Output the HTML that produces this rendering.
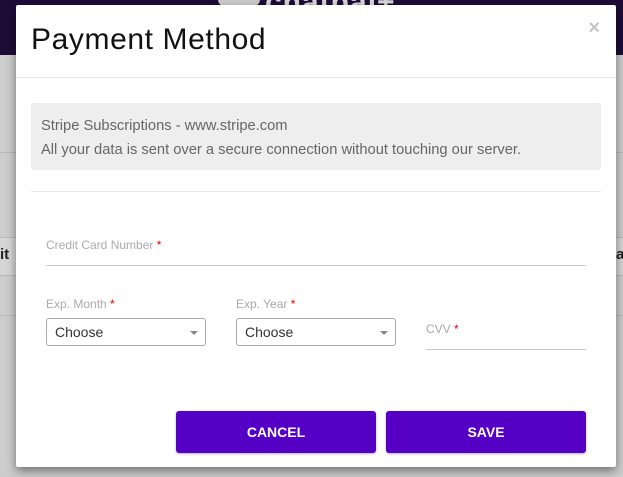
<!DOCTYPE html>
<html><head><meta charset="utf-8"><style>
*{box-sizing:border-box;margin:0;padding:0}
body{width:623px;height:477px;overflow:hidden;background:#cdcdcd;font-family:"Liberation Sans",sans-serif;position:relative}
.top{position:absolute;left:0;top:0;width:623px;height:55px;background:#1e0c37}
.logo{position:absolute;left:218px;top:-10px;width:42px;height:20px;border-radius:50%;background:#ccc}
.logot{position:absolute;left:265px;top:-14px;color:#d8d8d8;font-size:30px;font-weight:bold;letter-spacing:1px}
.ln{position:absolute;left:0;width:623px;height:1px;background:#b8b8b8}
.band{position:absolute;left:0;top:238px;width:623px;height:37px;background:#d6d6d6}
.bt{position:absolute;top:246px;font-size:15px;color:#222;font-weight:bold}
.modal{position:absolute;left:16px;top:5px;width:600px;height:462px;background:#fff;border-radius:2px;box-shadow:0 4px 10px rgba(0,0,0,.45)}
h1{position:absolute;left:15px;top:18px;font-size:30px;font-weight:300;color:#111;letter-spacing:0.6px}
.x{position:absolute;right:16px;top:12px;color:#c6c6c6;font-size:20px;font-weight:bold}
.hr{position:absolute;left:0;width:600px;height:1px;background:#e8e8e8}
.info{position:absolute;left:15px;top:98px;width:570px;height:67px;background:#eee;border-radius:3px;padding:11px 10px;color:#666;font-size:14.7px;line-height:24px}
.lbl{position:absolute;font-size:12px;color:#aaa}
.lbl b{color:#e00;font-weight:normal}
.u{position:absolute;height:1px;background:#c8c8c8}
.sel{position:absolute;width:160px;height:28px;border:1px solid #aaa;border-radius:3px;font-size:14px;color:#333;padding:5px 8px}
.sel:after{content:"";position:absolute;right:7px;top:12px;border:4px solid transparent;border-top:4px solid #888;border-bottom:0}
.btn{position:absolute;top:406px;width:200px;height:42px;background:#5500c4;border-radius:3px;color:#fff;font-weight:bold;font-size:14px;text-align:center;line-height:42px;box-shadow:0 1px 2px rgba(0,0,0,.3)}
</style></head><body>
<div class="top"><div class="logo"></div><div class="logot">chatpal+</div></div>
<div class="ln" style="top:152px"></div>
<div class="band"></div>
<div class="ln" style="top:237px"></div>
<div class="ln" style="top:275px"></div>
<div class="ln" style="top:315px"></div>
<div class="bt" style="left:0">it</div>
<div class="bt" style="left:616px">a</div>
<div class="modal">
<h1>Payment Method</h1>
<div class="x">×</div>
<div class="hr" style="top:72px"></div>
<div class="info">Stripe Subscriptions - www.stripe.com<br>All your data is sent over a secure connection without touching our server.</div>
<div class="hr" style="top:186px;left:15px;width:570px"></div>
<div class="lbl" style="left:30px;top:233px">Credit Card Number <b>*</b></div>
<div class="u" style="left:30px;top:260px;width:540px"></div>
<div class="lbl" style="left:30px;top:292px">Exp. Month <b>*</b></div>
<div class="lbl" style="left:220px;top:292px">Exp. Year <b>*</b></div>
<div class="sel" style="left:30px;top:313px">Choose</div>
<div class="sel" style="left:220px;top:313px">Choose</div>
<div class="lbl" style="left:410px;top:317px">CVV <b>*</b></div>
<div class="u" style="left:410px;top:344px;width:160px"></div>
<div class="btn" style="left:160px">CANCEL</div>
<div class="btn" style="left:370px">SAVE</div>
</div>
</body></html>
